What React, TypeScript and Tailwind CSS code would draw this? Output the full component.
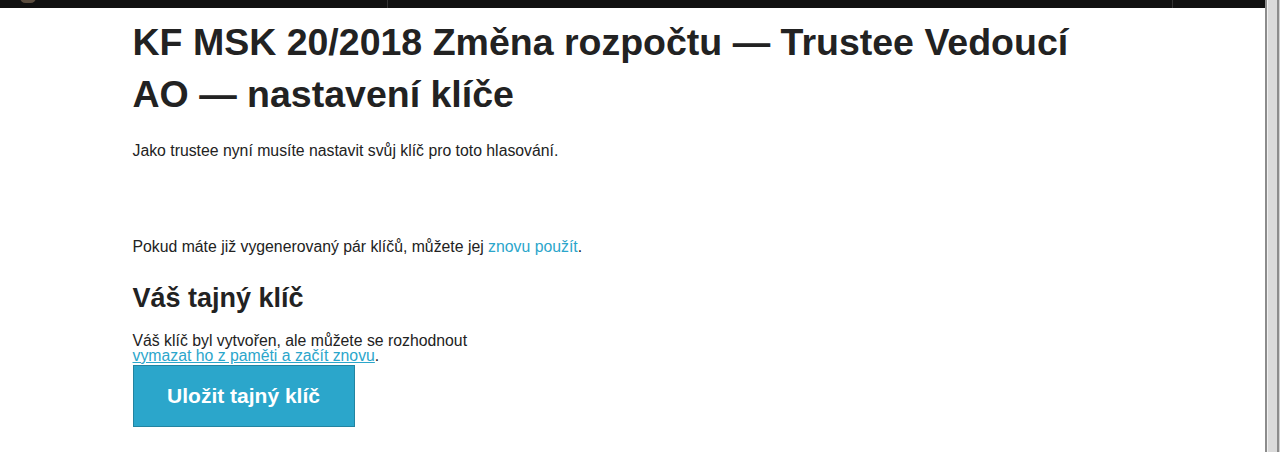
import React from "react";

const font = { fontFamily: '"Liberation Sans", Arial, sans-serif' };

const TopBar = () => (
  <div className="h-2 bg-[#111111] relative flex shrink-0">
    <div className="w-[388px] border-r border-[#333333] relative">
      <div className="absolute left-[20px] -top-[8px] w-[16px] h-[11px] rounded-full bg-[#5b4d3f]" />
    </div>
    <div className="w-[785px] border-r border-[#333333]" />
    <div className="flex-1" />
  </div>
);

const Scrollbar = () => (
  <div className="w-[15px] h-full shrink-0 bg-[#ececec] flex">
    <div className="w-[2px] bg-[#8c8c8c]" />
    <div className="flex-1 bg-[#dadada] border-l border-[#f0f0f0]" />
    <div className="w-[2px] bg-[#8c8c8c]" />
    <div className="w-[1px] bg-[#d0d0d0]" />
  </div>
);

export default function App() {
  return (
    <div className="w-[1280px] h-[452px] overflow-hidden flex bg-white text-[#222222]" style={font}>
      <div className="flex-1 flex flex-col">
        <TopBar />
        <div className="w-[1000px] mx-auto">
          <h1 className="mt-[8px] text-[37.5px] leading-[52px] font-bold">
            KF MSK 20/2018 Změna rozpočtu — Trustee Vedoucí AO — nastavení klíče
          </h1>
          <p className="mt-[19px] text-[15.8px] leading-[24px]">
            Jako trustee nyní musíte nastavit svůj klíč pro toto hlasování.
          </p>
          <p className="mt-[72px] text-[15.8px] leading-[24px]">
            Pokud máte již vygenerovaný pár klíčů, můžete jej{" "}
            <a href="#" className="text-[#2ba6cb]">
              znovu použít
            </a>
            .
          </p>
          <h2 className="mt-[22px] text-[27px] leading-[34px] font-bold">Váš tajný klíč</h2>
          <p className="mt-[18px] text-[15.8px] leading-[15px]">
            Váš klíč byl vytvořen, ale můžete se rozhodnout
            <br />
            <a href="#" className="text-[#2ba6cb] underline">
              vymazat ho z paměti a začít znovu
            </a>
            .
          </p>
          <button className="mt-[2px] w-[222px] h-[62px] bg-[#2ba6cb] border border-[#2284a1] text-white text-[21px] font-bold">
            Uložit tajný klíč
          </button>
        </div>
      </div>
      <Scrollbar />
    </div>
  );
}
